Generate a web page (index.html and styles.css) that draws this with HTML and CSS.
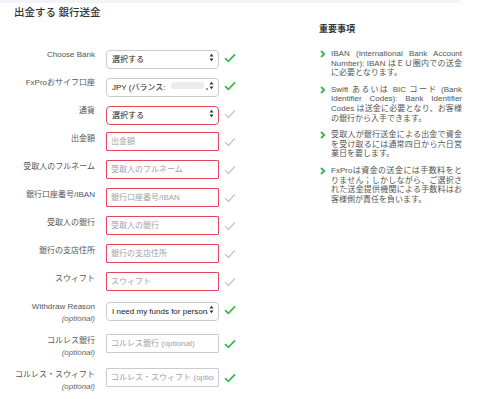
FILE: index.html
```html
<!DOCTYPE html>
<html lang="ja">
<head>
    <meta charset="UTF-8">
    <title>出金する 銀行送金</title>
    <link rel="stylesheet" href="styles.css">
</head>
<body>
<div class="topbar"></div>
<div class="page">
    <div class="main">
        <h1 class="title">出金する 銀行送金</h1>
        <form class="form" id="withdrawForm">
            <div class="row">
                <label class="label">Choose Bank</label>
                <div class="select-wrap">
                    <select class="field select"><option>選択する</option></select>
                    <span class="arrows"><svg width="5" height="9" viewBox="0 0 5 9"><path d="M0.5 3.6 L2.5 0.8 L4.5 3.6Z M0.5 5.4 L2.5 8.2 L4.5 5.4Z" fill="#333"/></svg></span>
                </div>
                <span class="check ok"><svg width="12" height="10" viewBox="0 0 12 10"><path d="M1 5.2 L4.4 8.4 L11 1.4" fill="none" stroke="#3cb550" stroke-width="1.7"/></svg></span>
            </div>
            <div class="row">
                <label class="label">FxProおサイフ口座</label>
                <div class="select-wrap">
                    <select class="field select"><option>JPY (バランス:</option></select>
                    <span class="blur"></span><span class="blur-dot"></span>
                    <span class="arrows"><svg width="5" height="9" viewBox="0 0 5 9"><path d="M0.5 3.6 L2.5 0.8 L4.5 3.6Z M0.5 5.4 L2.5 8.2 L4.5 5.4Z" fill="#333"/></svg></span>
                </div>
                <span class="check ok"><svg width="12" height="10" viewBox="0 0 12 10"><path d="M1 5.2 L4.4 8.4 L11 1.4" fill="none" stroke="#3cb550" stroke-width="1.7"/></svg></span>
            </div>
            <div class="row">
                <label class="label">通貨</label>
                <div class="select-wrap">
                    <select class="field select invalid"><option>選択する</option></select>
                    <span class="arrows"><svg width="5" height="9" viewBox="0 0 5 9"><path d="M0.5 3.6 L2.5 0.8 L4.5 3.6Z M0.5 5.4 L2.5 8.2 L4.5 5.4Z" fill="#333"/></svg></span>
                </div>
                <span class="check"><svg width="12" height="10" viewBox="0 0 12 10"><path d="M1 5.2 L4.4 8.4 L11 1.4" fill="none" stroke="#b9bdc2" stroke-width="1.1"/></svg></span>
            </div>
            <div class="row">
                <label class="label">出金額</label>
                <input class="field invalid" type="text" placeholder="出金額">
                <span class="check"><svg width="12" height="10" viewBox="0 0 12 10"><path d="M1 5.2 L4.4 8.4 L11 1.4" fill="none" stroke="#b9bdc2" stroke-width="1.1"/></svg></span>
            </div>
            <div class="row">
                <label class="label">受取人のフルネーム</label>
                <input class="field invalid" type="text" placeholder="受取人のフルネーム">
                <span class="check"><svg width="12" height="10" viewBox="0 0 12 10"><path d="M1 5.2 L4.4 8.4 L11 1.4" fill="none" stroke="#b9bdc2" stroke-width="1.1"/></svg></span>
            </div>
            <div class="row">
                <label class="label">銀行口座番号/IBAN</label>
                <input class="field invalid" type="text" placeholder="銀行口座番号/IBAN">
                <span class="check"><svg width="12" height="10" viewBox="0 0 12 10"><path d="M1 5.2 L4.4 8.4 L11 1.4" fill="none" stroke="#b9bdc2" stroke-width="1.1"/></svg></span>
            </div>
            <div class="row">
                <label class="label">受取人の銀行</label>
                <input class="field invalid" type="text" placeholder="受取人の銀行">
                <span class="check"><svg width="12" height="10" viewBox="0 0 12 10"><path d="M1 5.2 L4.4 8.4 L11 1.4" fill="none" stroke="#b9bdc2" stroke-width="1.1"/></svg></span>
            </div>
            <div class="row">
                <label class="label">銀行の支店住所</label>
                <input class="field invalid" type="text" placeholder="銀行の支店住所">
                <span class="check"><svg width="12" height="10" viewBox="0 0 12 10"><path d="M1 5.2 L4.4 8.4 L11 1.4" fill="none" stroke="#b9bdc2" stroke-width="1.1"/></svg></span>
            </div>
            <div class="row">
                <label class="label">スウィフト</label>
                <input class="field invalid" type="text" placeholder="スウィフト">
                <span class="check"><svg width="12" height="10" viewBox="0 0 12 10"><path d="M1 5.2 L4.4 8.4 L11 1.4" fill="none" stroke="#b9bdc2" stroke-width="1.1"/></svg></span>
            </div>
            <div class="row">
                <label class="label">Withdraw Reason<br><em>(optional)</em></label>
                <div class="select-wrap">
                    <select class="field select"><option>I need my funds for personal use</option></select>
                    <span class="arrows"><svg width="5" height="9" viewBox="0 0 5 9"><path d="M0.5 3.6 L2.5 0.8 L4.5 3.6Z M0.5 5.4 L2.5 8.2 L4.5 5.4Z" fill="#333"/></svg></span>
                </div>
                <span class="check ok"><svg width="12" height="10" viewBox="0 0 12 10"><path d="M1 5.2 L4.4 8.4 L11 1.4" fill="none" stroke="#3cb550" stroke-width="1.7"/></svg></span>
            </div>
            <div class="row">
                <label class="label">コルレス銀行<br><em>(optional)</em></label>
                <input class="field" type="text" placeholder="コルレス銀行 (optional)">
                <span class="check ok"><svg width="12" height="10" viewBox="0 0 12 10"><path d="M1 5.2 L4.4 8.4 L11 1.4" fill="none" stroke="#3cb550" stroke-width="1.7"/></svg></span>
            </div>
            <div class="row">
                <label class="label">コルレス・スウィフト<br><em>(optional)</em></label>
                <input class="field" type="text" placeholder="コルレス・スウィフト (optional)">
                <span class="check ok"><svg width="12" height="10" viewBox="0 0 12 10"><path d="M1 5.2 L4.4 8.4 L11 1.4" fill="none" stroke="#3cb550" stroke-width="1.7"/></svg></span>
            </div>
        </form>
    </div>
    <aside class="notes">
        <h2>重要事項</h2>
        <ul>
            <li><svg class="bullet" width="6" height="8" viewBox="0 0 6 8"><path d="M1 1 L4.2 4 L1 7" fill="none" stroke="#3cb550" stroke-width="1.9"/></svg><span>IBAN (International Bank Account Number): IBAN はＥＵ圏内での送金に必要となります。</span></li>
            <li><svg class="bullet" width="6" height="8" viewBox="0 0 6 8"><path d="M1 1 L4.2 4 L1 7" fill="none" stroke="#3cb550" stroke-width="1.9"/></svg><span>Swift あるいは BIC コード (Bank Identifier Codes): Bank Identifier Codes は送金に必要となり、お客様の銀行から入手できます。</span></li>
            <li><svg class="bullet" width="6" height="8" viewBox="0 0 6 8"><path d="M1 1 L4.2 4 L1 7" fill="none" stroke="#3cb550" stroke-width="1.9"/></svg><span>受取人が銀行送金による出金で資金を受け取るには通常四日から六日営業日を要します。</span></li>
            <li><svg class="bullet" width="6" height="8" viewBox="0 0 6 8"><path d="M1 1 L4.2 4 L1 7" fill="none" stroke="#3cb550" stroke-width="1.9"/></svg><span>FxProは資金の送金には手数料をとりません；しかしながら、ご選択された送金提供機関による手数料はお客様側が責任を負います。</span></li>
        </ul>
    </aside>
</div>
</body>
</html>
```

FILE: styles.css
```css
body { margin: 0; font-family: "Liberation Sans", "Noto Sans CJK JP", sans-serif; color: #444; background: #fff; }
.topbar { height: 3px; width: 460px; background: #f3f4f6; }
.page { display: flex; }
.main { width: 240px; }
.title { margin: 0; padding: 3px 0 0 14px; font-family: "Liberation Serif", "Noto Sans CJK JP", serif; font-size: 10.5px; line-height: 14px; font-weight: 500; color: #333; }
.form { margin-top: 28px; }
.row { display: flex; align-items: flex-start; margin-bottom: 9px; }
.label { width: 95px; margin-right: 11px; padding-top: 1px; text-align: right; font-size: 8px; line-height: 12px; color: #555; }
.label em { color: #666; }
.field { width: 113px; height: 19px; box-sizing: border-box; margin: 0; border: 1px solid #c9cbce; border-radius: 1px; padding: 0 4px; font-family: inherit; font-size: 8px; color: #222; background: #fff; outline: none; }
.field::placeholder { color: #a2a2a2; }
.field.invalid { border-color: #e4475c; }
.select-wrap { position: relative; width: 113px; height: 19px; }
.select { -webkit-appearance: none; appearance: none; border-radius: 4px; padding: 0 10px 0 5px; color: #222; }
.arrows { position: absolute; right: 5px; top: 5px; line-height: 0; background: #fff; }
.blur { position: absolute; left: 65px; top: 6px; width: 33px; height: 7px; background: #ececec; border-radius: 2px; }
.blur-dot { position: absolute; left: 100px; top: 12px; width: 2px; height: 2px; background: #999; }
.check { display: flex; align-items: center; height: 19px; margin-left: 5px; }
.notes { margin-left: 79px; width: 143px; padding-top: 20px; }
.notes h2 { margin: 0; font-family: "Liberation Serif", "Noto Sans CJK JP", serif; font-size: 9px; line-height: 12px; font-weight: 700; color: #333; }
.notes ul { list-style: none; margin: 14px 0 0 0; padding: 0; }
.notes li { display: flex; margin-bottom: 7px; font-size: 8px; line-height: 9.6px; color: #555; }
.notes li span { flex: 1; text-align: justify; }
.bullet { flex: none; margin: 1px 5px 0 1px; }
```
